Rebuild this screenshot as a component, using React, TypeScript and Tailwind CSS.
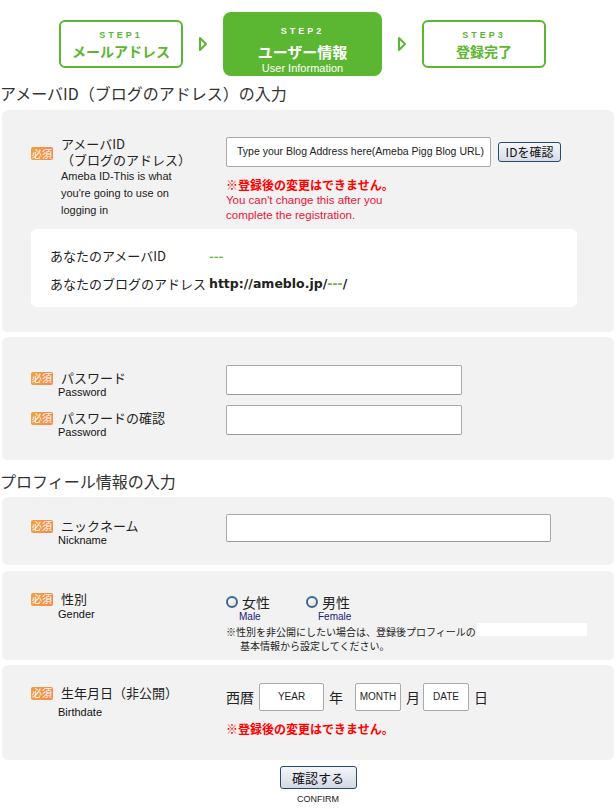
import React from "react"

const jp = { fontFamily: '"Noto Sans CJK JP", "Liberation Sans", sans-serif' }
const en = { fontFamily: '"Liberation Sans", "Noto Sans CJK JP", sans-serif' }
const verd = { fontFamily: '"DejaVu Sans", "Noto Sans CJK JP", sans-serif' }

function Badge() {
  return (
    <span className="flex h-[13px] w-[22px] shrink-0 items-center justify-center rounded-[2px] bg-gradient-to-r from-[#f0a040] to-[#f58a50] text-[10px] leading-none text-white">
      必須
    </span>
  )
}

// label column, fixed height so the row height comes from the field
function Label({ jpText, enText, h, pt, enGap = 0 }: { jpText: string; enText: string; h: number; pt: number; enGap?: number }) {
  return (
    <div className="w-[195px] shrink-0" style={{ height: h, paddingTop: pt }}>
      <div className="flex h-[16px] items-center gap-[8px]">
        <Badge />
        <span className="whitespace-nowrap text-[13px] leading-[16px] text-[#222]">{jpText}</span>
      </div>
      <div style={{ ...en, marginTop: enGap }} className="pl-[27px] text-[11px] leading-[13px] text-[#111]">
        {enText}
      </div>
    </div>
  )
}

function Step({ n, title }: { n: number; title: string }) {
  return (
    <div className="flex h-[48px] w-[124px] flex-col items-center rounded-[6px] border-2 border-[#5bb631] bg-white pt-[8px] text-[#5bb631]">
      <div style={en} className="text-[9px] font-bold leading-[10px] tracking-[3px]">STEP{n}</div>
      <div className="pt-[3px] text-[14px] font-bold leading-[17px]">{title}</div>
    </div>
  )
}

function Arrow() {
  return (
    <svg width="10" height="16" viewBox="0 0 10 16" className="mx-[15px]">
      <path d="M2 2 L8 8 L2 14 Z" fill="none" stroke="#5bb631" strokeWidth="2" strokeLinejoin="round" />
    </svg>
  )
}

function Field({ w, h = 30 }: { w: number; h?: number }) {
  return <div className="shrink-0 rounded-[2px] border border-[#aaa] border-b-[#999] bg-white" style={{ width: w, height: h }} />
}

function Radio() {
  return <span className="inline-block h-[12px] w-[12px] rounded-full border-2 border-[#3d6790] bg-gradient-to-br from-white to-[#ddd]" />
}

function DateBox({ text, w, ml }: { text: string; w: string; ml: string }) {
  return (
    <span style={en} className={`${w} ${ml} flex h-[28px] items-center justify-center rounded-[2px] border border-[#aaa] bg-white text-[10px] text-[#222]`}>
      {text}
    </span>
  )
}

export default function App() {
  return (
    <div style={jp} className="w-[616px] bg-white text-[#222]">
      {/* steps */}
      <div className="flex items-center pt-[12px] pl-[59px]">
        <Step n={1} title="メールアドレス" />
        <Arrow />
        <div className="flex h-[64px] w-[159px] flex-col items-center rounded-[8px] bg-[#5bb631] pt-[14px] text-white">
          <div style={en} className="text-[9px] font-bold leading-[10px] tracking-[3px]">STEP2</div>
          <div className="pt-[7px] text-[15px] font-bold leading-[17px]">ユーザー情報</div>
          <div style={en} className="mt-[1px] text-[11px] leading-[14px]">User Information</div>
        </div>
        <Arrow />
        <Step n={3} title="登録完了" />
      </div>

      <h2 className="pt-[6px] text-[16px] leading-[22px] text-[#333]">アメーバID（ブログのアドレス）の入力</h2>

      {/* ameba id */}
      <div className="mx-[2px] mt-[6px] rounded-[6px] bg-[#f2f2f2] px-[29px] pt-[27px] pb-[25px]">
        <div className="flex">
          <div className="-mt-[1px] w-[195px] shrink-0">
            <div className="flex items-start gap-[8px]">
              <div className="mt-[11px]"><Badge /></div>
              <div className="text-[13px] leading-[16px] text-[#222]">アメーバID<br />（ブログのアドレス）</div>
            </div>
            <div style={en} className="pl-[30px] text-[11px] leading-[17px] text-[#222]">
              Ameba ID-This is what<br />you're going to use on<br />logging in
            </div>
          </div>
          <div>
            <div className="flex items-center gap-[7px]">
              <div style={en} className="flex h-[30px] w-[265px] items-center overflow-hidden whitespace-nowrap rounded-[2px] border border-[#aaa] bg-white pl-[10px] text-[10.5px] text-[#222]">
                Type your Blog Address here(Ameba Pigg Blog URL)
              </div>
              <button className="h-[20px] w-[63px] rounded-[3px] border border-[#2a4a6a] bg-gradient-to-b from-[#f4f6fa] to-[#d6dce6] text-[12px] leading-[18px] text-[#111]">
                IDを確認
              </button>
            </div>
            <div className="mt-[10px] text-[12px] font-bold leading-[16px] text-[#f00]">※登録後の変更はできません。</div>
            <div style={en} className="text-[11.5px] leading-[15px] text-[#e8163a]">
              You can't change this after you<br />complete the registration.
            </div>
          </div>
        </div>
        <div className="mt-[6px] mr-[8px] rounded-[6px] bg-white px-[19px] pt-[13px] pb-[9px] text-[13px] leading-[28px] text-[#222]">
          <div className="flex">
            <span className="w-[159px]">あなたのアメーバID</span>
            <span className="font-bold text-[#6ab83c]">---</span>
          </div>
          <div className="flex">
            <span className="w-[159px]">あなたのブログのアドレス</span>
            <span style={verd} className="text-[12.5px] font-bold">http://ameblo.jp/<span className="text-[#6ab83c]">---</span>/</span>
          </div>
        </div>
      </div>

      {/* password */}
      <div className="mx-[2px] mt-[5px] rounded-[6px] bg-[#f2f2f2] px-[29px] pt-[28px] pb-[25px]">
        <div className="flex">
          <Label jpText="パスワード" enText="Password" h={30} pt={5} />
          <Field w={236} />
        </div>
        <div className="mt-[10px] flex">
          <Label jpText="パスワードの確認" enText="Password" h={30} pt={5} />
          <Field w={236} />
        </div>
      </div>

      <h2 className="pt-[10px] text-[16px] leading-[22px] text-[#333]">プロフィール情報の入力</h2>

      {/* nickname */}
      <div className="mx-[2px] mt-[5px] rounded-[6px] bg-[#f2f2f2] px-[29px] pt-[17px] pb-[23px]">
        <div className="flex">
          <Label jpText="ニックネーム" enText="Nickname" h={28} pt={4} />
          <Field w={325} h={28} />
        </div>
      </div>

      {/* gender */}
      <div className="mx-[2px] mt-[6px] rounded-[6px] bg-[#f2f2f2] px-[29px] pt-[20px] pb-[7px]">
        <div className="flex">
          <Label jpText="性別" enText="Gender" h={62} pt={0} enGap={1} />
          <div className="pt-[3px]">
            <div className="flex text-[14px] leading-[16px]">
              <div className="w-[80px]">
                <div className="flex items-center gap-[4px]"><Radio />女性</div>
                <div style={en} className="pl-[13px] text-[10px] leading-[13px] text-[#1a1a7a]">Male</div>
              </div>
              <div>
                <div className="flex items-center gap-[4px]"><Radio />男性</div>
                <div style={en} className="pl-[12px] text-[10px] leading-[13px] text-[#1a1a7a]">Female</div>
              </div>
            </div>
            <div className="mt-[2px] flex whitespace-nowrap text-[10px] leading-[14px] text-[#222]">
              <span>※性別を非公開にしたい場合は、登録後プロフィールの</span>
              <span className="ml-[1px] -mt-[2px] h-[13px] w-[110px] shrink-0 bg-white" />
            </div>
            <div className="pl-[14px] text-[10px] leading-[14px] text-[#222]">基本情報から設定してください。</div>
          </div>
        </div>
      </div>

      {/* birthdate */}
      <div className="mx-[2px] mt-[5px] rounded-[6px] bg-[#f2f2f2] px-[29px] pt-[18px] pb-[23px]">
        <div className="flex">
          <Label jpText="生年月日（非公開）" enText="Birthdate" h={54} pt={2} enGap={5} />
          <div>
            <div className="flex items-center text-[14px] leading-[28px] text-[#222]">
              <span>西暦</span>
              <DateBox text="YEAR" w="w-[65px]" ml="ml-[5px]" />
              <span className="ml-[5px]">年</span>
              <DateBox text="MONTH" w="w-[46px]" ml="ml-[12px]" />
              <span className="ml-[5px]">月</span>
              <DateBox text="DATE" w="w-[46px]" ml="ml-[3px]" />
              <span className="ml-[5px]">日</span>
            </div>
            <div className="mt-[10px] text-[12px] font-bold leading-[16px] text-[#f00]">※登録後の変更はできません。</div>
          </div>
        </div>
      </div>

      <div className="flex flex-col items-center pt-[6px] pb-[4px] pl-[20px]">
        <button className="h-[23px] w-[77px] rounded-[3px] border border-[#2a4a6a] bg-gradient-to-b from-[#f4f6fa] to-[#d2d8e4] text-[13px] leading-[20px] text-[#111]">
          確認する
        </button>
        <div style={en} className="pt-[4px] text-[9px] leading-[12px] text-[#222]">CONFIRM</div>
      </div>
    </div>
  )
}
